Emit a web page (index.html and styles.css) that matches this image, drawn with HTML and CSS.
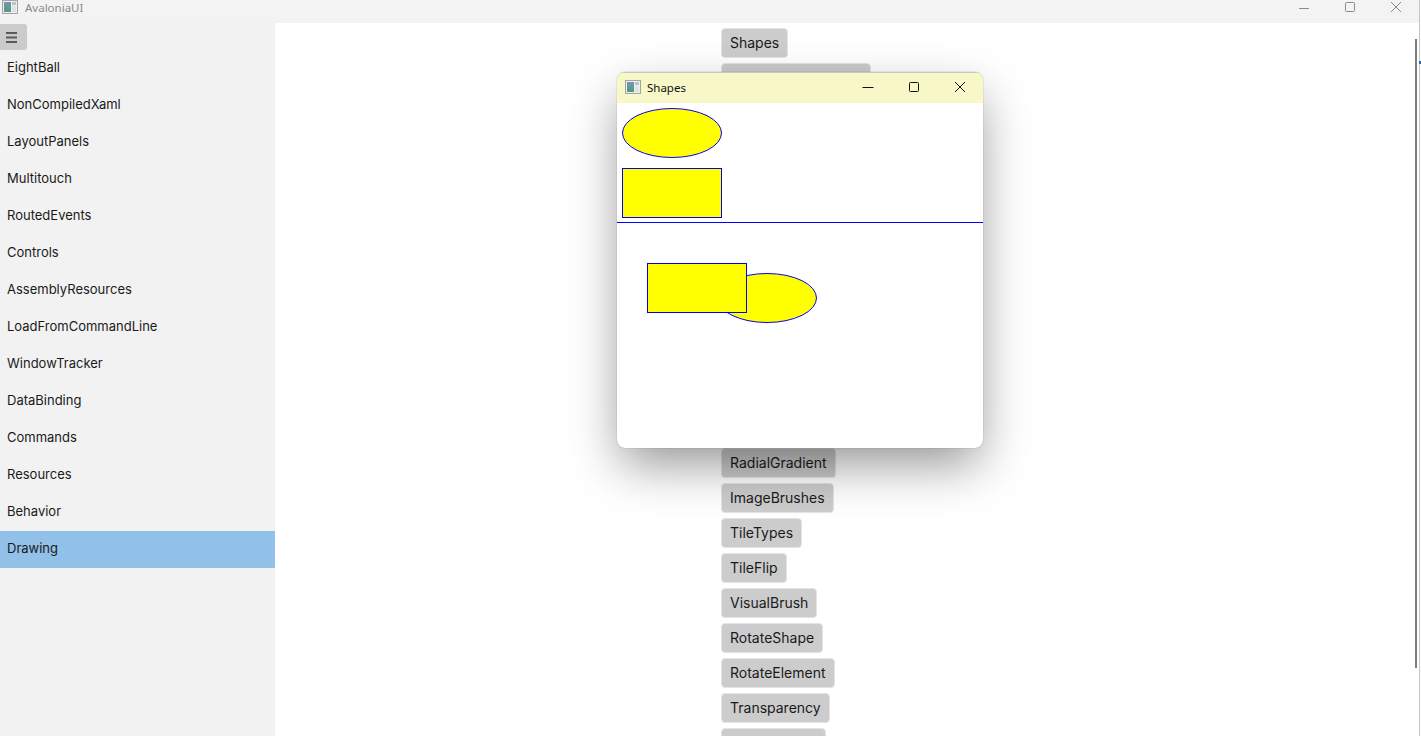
FILE: index.html
```html
<!DOCTYPE html>
<html lang="en">
<head>
    <meta charset="UTF-8">
    <title>AvaloniaUI</title>
    <link rel="stylesheet" href="styles.css">
</head>
<body>
    <div class="app">
        <!-- Main title bar -->
        <header class="titlebar">
            <div class="title-left">
                <svg class="app-icon" width="16" height="14" viewBox="0 0 16 14">
                    <defs>
                        <linearGradient id="icon-fill" x1="0" y1="0" x2="0" y2="1">
                            <stop offset="0" stop-color="#7c93b4"/>
                            <stop offset="1" stop-color="#4f9a7e"/>
                        </linearGradient>
                    </defs>
                    <rect x="0.5" y="0.5" width="15" height="13" fill="#eef0f0" stroke="#a4a4a4"/>
                    <rect x="2" y="2" width="7" height="10" fill="url(#icon-fill)"/>
                    <rect x="10" y="2" width="4" height="3" fill="#b4c4cc"/>
                    <rect x="10" y="6" width="4" height="6" fill="#dde2e2"/>
                </svg>
                <span>AvaloniaUI</span>
            </div>
            <div class="win-controls">
                <svg width="12" height="12" viewBox="0 0 12 12"><path d="M1 7.5h10" stroke="#8a8a8a" fill="none"/></svg>
                <svg width="12" height="12" viewBox="0 0 12 12"><rect x="1.5" y="1.5" width="9" height="9" rx="1" stroke="#8a8a8a" fill="none"/></svg>
                <svg width="12" height="12" viewBox="0 0 12 12"><path d="M1 1l10 10M11 1L1 11" stroke="#8a8a8a" fill="none"/></svg>
            </div>
        </header>

        <div class="main">
            <!-- Sidebar -->
            <nav class="sidebar">
                <button class="menu-btn">
                    <svg width="11" height="11" viewBox="0 0 11 11"><path d="M0 1h11M0 5.5h11M0 10h11" stroke="#5a5a5a" stroke-width="1.8" fill="none"/></svg>
                </button>
                <ul class="nav-list">
                    <li>EightBall</li>
                    <li>NonCompiledXaml</li>
                    <li>LayoutPanels</li>
                    <li>Multitouch</li>
                    <li>RoutedEvents</li>
                    <li>Controls</li>
                    <li>AssemblyResources</li>
                    <li>LoadFromCommandLine</li>
                    <li>WindowTracker</li>
                    <li>DataBinding</li>
                    <li>Commands</li>
                    <li>Resources</li>
                    <li>Behavior</li>
                    <li class="active">Drawing</li>
                </ul>
            </nav>

            <!-- Button list -->
            <section class="content">
                <div class="btn-list">
                    <button>Shapes</button>
                    <button class="btn-wide">Transforms</button>
                    <button>Lines</button>
                    <button>Paths</button>
                    <button>Geometry</button>
                    <button>Clipping</button>
                    <button>Opacity</button>
                    <button>SolidColor</button>
                    <button>LinearGradient</button>
                    <button>Bitmaps</button>
                    <button>Stretch</button>
                    <button>Pens</button>
                    <button>RadialGradient</button>
                    <button>ImageBrushes</button>
                    <button>TileTypes</button>
                    <button>TileFlip</button>
                    <button>VisualBrush</button>
                    <button>RotateShape</button>
                    <button>RotateElement</button>
                    <button>Transparency</button>
                    <button class="btn-cut"></button>
                </div>
            </section>
        </div>

        <div class="scroll-thumb"></div>
        <div class="edge-mark"></div>
    </div>

    <!-- Floating Shapes window -->
    <div class="shapes-window">
        <div class="shapes-titlebar">
            <div class="title-left">
                <svg class="app-icon" width="16" height="14" viewBox="0 0 16 14">
                    <rect x="0.5" y="0.5" width="15" height="13" fill="#eef0f0" stroke="#a4a4a4"/>
                    <rect x="2" y="2" width="7" height="10" fill="url(#icon-fill)"/>
                    <rect x="10" y="2" width="4" height="3" fill="#b4c4cc"/>
                    <rect x="10" y="6" width="4" height="6" fill="#dde2e2"/>
                </svg>
                <span>Shapes</span>
            </div>
            <div class="shapes-controls">
                <svg width="12" height="12" viewBox="0 0 12 12"><path d="M0.5 6.5h11" stroke="#111" fill="none"/></svg>
                <svg width="12" height="12" viewBox="0 0 12 12"><rect x="1.5" y="1.5" width="9" height="9" rx="1" stroke="#111" fill="none"/></svg>
                <svg width="12" height="12" viewBox="0 0 12 12"><path d="M1 1l10 10M11 1L1 11" stroke="#111" fill="none"/></svg>
            </div>
        </div>
        <svg class="shapes-canvas" width="366" height="345" viewBox="0 0 366 345">
            <ellipse cx="55" cy="30" rx="49.5" ry="24.5" fill="#ff0" stroke="#00f"/>
            <rect x="5.5" y="65.5" width="99" height="49" fill="#ff0" stroke="#00f"/>
            <path d="M0 119.5h366" stroke="#00f" fill="none"/>
            <ellipse cx="150" cy="195" rx="49.5" ry="24.5" fill="#ff0" stroke="#00f"/>
            <rect x="30.5" y="160.5" width="99" height="49" fill="#ff0" stroke="#00f"/>
        </svg>
    </div>
</body>
</html>
```

FILE: styles.css
```css
* {
    margin: 0;
    padding: 0;
    box-sizing: border-box;
}

body {
    font-family: 'Inter', 'Liberation Sans', sans-serif;
    background: #fff;
    color: #1a1a1a;
    height: 736px;
    overflow: hidden;
}

.app {
    width: 1420px;
    height: 736px;
    border-right: 1px solid #c6c6c6;
    display: flex;
    flex-direction: column;
    position: relative;
}

.titlebar {
    height: 23px;
    flex-shrink: 0;
    background: #f3f3f3;
    display: flex;
    justify-content: space-between;
    color: #8a8a8a;
    font-family: 'Noto Sans', sans-serif;
    font-size: 11.5px;
}

.title-left {
    display: flex;
    align-items: center;
    gap: 7px;
}

.titlebar .title-left {
    padding-left: 2px;
    height: 14px;
}

.win-controls {
    display: flex;
    gap: 34px;
    padding: 1px 17px 0 0;
    height: 14px;
}

.main {
    flex: 1;
    display: flex;
    min-height: 0;
}

.sidebar {
    width: 275px;
    flex-shrink: 0;
    background: #f2f2f2;
}

.menu-btn {
    display: flex;
    align-items: center;
    width: 27px;
    height: 26px;
    margin-top: 1px;
    padding-left: 6px;
    border: none;
    border-radius: 0 3px 3px 0;
    background: #cbcbcb;
}

.nav-list {
    list-style: none;
    font-size: 13px;
}

.nav-list li {
    height: 37px;
    padding-left: 7px;
    line-height: 34px;
}

.nav-list li.active {
    background: #91c0e8;
}

.content {
    flex: 1;
    overflow: hidden;
    padding: 5px 0 0 446px;
}

.btn-list {
    display: flex;
    flex-direction: column;
    align-items: flex-start;
    gap: 5px;
}

.btn-list button {
    height: 30px;
    padding: 0 8px 1px;
    border: 1px solid #e4e4e4;
    border-radius: 4px;
    background: #ccc;
    color: #1a1a1a;
    font-family: inherit;
    font-size: 14px;
}

.btn-list .btn-wide {
    width: 150px;
}

/* last one runs off the bottom, label not visible */
.btn-list .btn-cut {
    width: 105px;
}

.scroll-thumb {
    position: absolute;
    left: 1415px;
    top: 39px;
    width: 2px;
    height: 629px;
    background: #7d7d7d;
}

.edge-mark {
    position: absolute;
    left: 1419px;
    top: 61px;
    width: 2px;
    height: 3px;
    background: #1f6fb5;
}

.shapes-window {
    position: absolute;
    left: 617px;
    top: 72px;
    width: 366px;
    height: 376px;
    background: #fff;
    border-radius: 8px;
    overflow: hidden;
    box-shadow: 0 0 1px rgba(0, 0, 0, 0.5), 0 20px 50px -4px rgba(0, 0, 0, 0.42);
}

.shapes-titlebar {
    height: 31px;
    padding: 0 0 2px 8px;
    background: #f7f7c8;
    border-top: 1px solid #c9c9b4;
    display: flex;
    justify-content: space-between;
    align-items: center;
    color: #111;
    font-family: 'Noto Sans', sans-serif;
    font-size: 11.5px;
}

.shapes-titlebar .title-left {
    gap: 6px;
}

.shapes-controls {
    display: flex;
    gap: 34px;
    padding-right: 17px;
}

.shapes-canvas {
    display: block;
}
```
